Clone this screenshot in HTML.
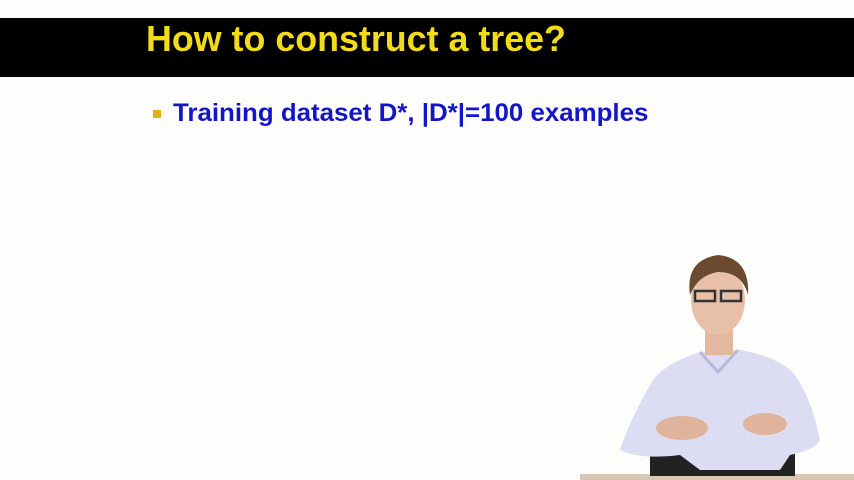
<!DOCTYPE html>
<html><head><style>
body{margin:0;width:854px;height:480px;background:#fdfdfb;overflow:hidden;position:relative;font-family:"Liberation Sans",sans-serif}
.bar{position:absolute;left:0;top:18px;width:854px;height:59px;background:#000}
.t{position:absolute;left:146px;top:18px;color:#f2dc1a;font-weight:bold;font-size:36px;white-space:nowrap;transform-origin:0 0;transform:scaleX(0.995);line-height:42px}
.b{position:absolute;left:173px;top:97px;color:#1414c8;font-weight:bold;font-size:25px;white-space:nowrap;transform-origin:0 0;transform:scaleX(1.035);line-height:32px}
.sq{position:absolute;left:153px;top:110px;width:8px;height:8px;background:#e5b01a}
</style></head><body>
<div class="bar"></div>
<div class="t">How to construct a tree?</div>
<div class="sq"></div>
<div class="b">Training dataset D*, |D*|=100 examples</div>
<svg style="position:absolute;left:0;top:0" width="854" height="480">
<rect x="580" y="474" width="274" height="6" fill="#d9c7b3"/>
<rect x="650" y="440" width="145" height="36" fill="#222"/>
<path d="M700 352 Q660 365 650 385 Q630 420 620 450 Q640 460 680 455 L700 470 L780 470 L790 455 Q815 450 820 440 Q812 400 795 375 Q780 357 740 350 Z" fill="#dcdcf2"/>
<path d="M700 352 L718 372 L738 350" fill="none" stroke="#b8b8d8" stroke-width="3"/>
<ellipse cx="682" cy="428" rx="26" ry="12" fill="#e0b49c"/>
<ellipse cx="765" cy="424" rx="22" ry="11" fill="#e0b49c"/>
<rect x="705" y="320" width="28" height="35" fill="#e3b8a0"/>
<ellipse cx="718" cy="300" rx="27" ry="35" fill="#e8c0a8"/>
<path d="M690 295 Q685 260 718 255 Q750 258 748 295 Q742 272 718 272 Q698 275 690 295Z" fill="#6a4a30"/>
<rect x="695" y="291" width="20" height="10" fill="none" stroke="#333" stroke-width="2.5"/>
<rect x="721" y="291" width="20" height="10" fill="none" stroke="#333" stroke-width="2.5"/>
</svg>
</body></html>
